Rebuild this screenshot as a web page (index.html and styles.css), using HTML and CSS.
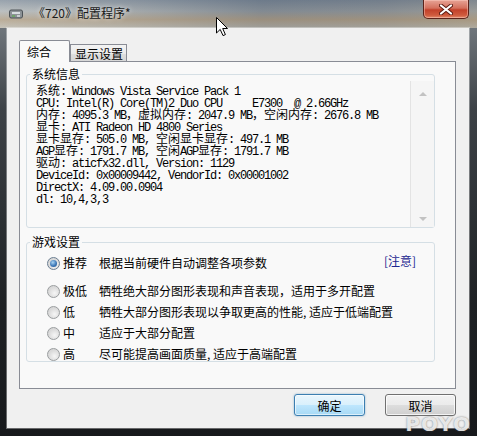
FILE: index.html
```html
<!DOCTYPE html>
<html lang="zh-CN">
<head>
    <meta charset="UTF-8">
    <title>《720》配置程序</title>
    <link rel="stylesheet" href="styles.css">
</head>
<body>
    <div class="window">
        <div class="titlebar">
            <svg class="app-icon" width="14" height="12" viewBox="0 0 14 12">
                <path d="M2 2 H12 Q13.5 2 13.5 4 V8 Q13.5 10 12 10 H2 Q0.5 10 0.5 8 V4 Q0.5 2 2 2 Z" fill="#8c9296" stroke="#4d5357" stroke-width="1"/>
                <rect x="3" y="4" width="8" height="2" fill="#d8dde0"/>
                <rect x="3" y="7" width="3" height="2" fill="#6fa36a"/>
                <rect x="8" y="7" width="3" height="2" fill="#c9cdd0"/>
            </svg>
            <span class="title">《720》配置程序*</span>
            <div class="close-btn">
                <svg width="14" height="11" viewBox="0 0 14 11">
                    <path d="M2 1.5 L12 9.5 M12 1.5 L2 9.5" stroke="#5a1a10" stroke-width="4" stroke-linecap="round"/>
                    <path d="M2 1.5 L12 9.5 M12 1.5 L2 9.5" stroke="#ffffff" stroke-width="2.2" stroke-linecap="round"/>
                </svg>
            </div>
        </div>

        <div class="client">
            <div class="tabs">
                <div class="tab active">综合</div>
                <div class="tab">显示设置</div>
            </div>

            <div class="panel">
                <fieldset class="group">
                    <legend>系统信息</legend>
                    <div class="info">
<pre class="info-text"><span class="c">系统</span>: Windows Vista Service Pack 1
CPU: Intel(R) Core(TM)2 Duo CPU     E7300  @ 2.66GHz
<span class="c">内存</span>: 4095.3 MB<span class="c">，虚拟内存</span>: 2047.9 MB<span class="c">，空闲内存</span>: 2676.8 MB
<span class="c">显卡</span>: ATI Radeon HD 4800 Series
<span class="c">显卡显存</span>: 505.0 MB, <span class="c">空闲显卡显存</span>: 497.1 MB
AGP<span class="c">显存</span>: 1791.7 MB, <span class="c">空闲</span>AGP<span class="c">显存</span>: 1791.7 MB
<span class="c">驱动</span>: aticfx32.dll, Version: 1129
DeviceId: 0x00009442, VendorId: 0x00001002
DirectX: 4.09.00.0904
dl: 10,4,3,3</pre>
                        <div class="scrollbar">
                            <span class="arrow up"></span>
                            <span class="arrow down"></span>
                        </div>
                    </div>
                </fieldset>

                <fieldset class="group game">
                    <legend>游戏设置</legend>
                    <div class="options">
                        <div class="option first">
                            <span class="radio checked"></span>
                            <span class="opt-name">推荐</span>
                            <span class="opt-desc">根据当前硬件自动调整各项参数</span>
                            <span class="note">[注意]</span>
                        </div>
                        <div class="option">
                            <span class="radio"></span>
                            <span class="opt-name">极低</span>
                            <span class="opt-desc">牺牲绝大部分图形表现和声音表现，适用于多开配置</span>
                        </div>
                        <div class="option">
                            <span class="radio"></span>
                            <span class="opt-name">低</span>
                            <span class="opt-desc">牺牲大部分图形表现以争取更高的性能, 适应于低端配置</span>
                        </div>
                        <div class="option">
                            <span class="radio"></span>
                            <span class="opt-name">中</span>
                            <span class="opt-desc">适应于大部分配置</span>
                        </div>
                        <div class="option">
                            <span class="radio"></span>
                            <span class="opt-name">高</span>
                            <span class="opt-desc">尽可能提高画面质量, 适应于高端配置</span>
                        </div>
                    </div>
                </fieldset>
            </div>

            <div class="buttons">
                <button type="button" class="btn default">确定</button>
                <button type="button" class="btn">取消</button>
            </div>
        </div>

        <svg class="cursor" width="13" height="20" viewBox="0 0 13 20">
            <path d="M0.5 0.5 L0.5 16 L4.2 12.4 L7 18.6 L9.4 17.6 L6.7 11.5 L11.5 11.5 Z" fill="#fff" stroke="#000" stroke-width="1"/>
        </svg>
        <div class="watermark">POYO</div>
    </div>
</body>
</html>
```

FILE: styles.css
```css
body {
    margin: 0;
    background: #25282c;
    font-family: "Noto Sans CJK SC", sans-serif;
}

.window {
    position: relative;
    width: 477px;
    height: 436px;
    display: flex;
    flex-direction: column;
    overflow: hidden;
    background: linear-gradient(180deg, #80878d 0%, #3d4247 25%, #1e2124 70%, #17191c 100%);
}

/* title bar (aero glass, blurred) */
.titlebar {
    height: 28px;
    display: flex;
    align-items: flex-start;
    padding: 0 8px 0 9px;
    background:
        linear-gradient(180deg, rgba(70, 90, 115, 0.4) 0%, rgba(110, 115, 115, 0.2) 40%, rgba(170, 142, 104, 0.55) 70%, rgba(185, 175, 155, 0.45) 100%),
        linear-gradient(90deg, #cfd3d4 0%, #b5babd 25%, #87909a 55%, #8f959b 80%, #a6a6a1 100%);
}

.app-icon {
    margin-top: 8px;
}

.title {
    margin: 5px 0 0 10px;
    font-size: 12px;
    line-height: 16px;
    color: #1a1a1a;
    text-shadow: 0 0 5px rgba(255, 255, 255, 0.9);
}

.close-btn {
    margin-left: auto;
    width: 46px;
    height: 19px;
    box-sizing: border-box;
    display: flex;
    align-items: center;
    justify-content: center;
    border: 1px solid #5b231a;
    border-top: none;
    border-radius: 0 0 5px 5px;
    background: linear-gradient(180deg, #e7a496 0%, #d4705d 45%, #c2412a 55%, #cf5b3e 85%, #e38d6d 100%);
    box-shadow: inset 0 0 0 1px rgba(255, 210, 200, 0.45);
}

/* client area */
.client {
    flex: 1;
    margin: 0 8px 8px 7px;
    padding: 12px 13px 0 12px;
    display: flex;
    flex-direction: column;
    background: #f0f0f0;
    box-shadow: 0 0 0 1px rgba(255, 255, 255, 0.35);
}

.tabs {
    display: flex;
    align-items: flex-end;
    height: 22px;
}

.tab {
    box-sizing: border-box;
    border: 1px solid #898c95;
    border-bottom: none;
    font-size: 12px;
    color: #000;
}

.tab.active {
    position: relative;
    z-index: 2;
    width: 51px;
    height: 22px;
    padding: 2px 0 0 7px;
    line-height: 18px;
    background: #f9f9f9;
    border-radius: 2px 2px 0 0;
}

.tab:not(.active) {
    width: 57px;
    height: 18px;
    padding-left: 4px;
    line-height: 17px;
    background: linear-gradient(180deg, #f3f3f3 0%, #ebebeb 50%, #dedede 51%, #d6d6d6 100%);
}

.panel {
    height: 328px;
    box-sizing: border-box;
    margin-top: -1px;
    padding: 5px 20px 0 6px;
    border: 1px solid #898c95;
    background: #f9f9f9;
}

/* group boxes */
.group {
    margin: 0;
    padding: 0;
    min-width: 0;
    border: 1px solid #d5dfe5;
    border-radius: 3px;
}

.group legend {
    margin-left: 3px;
    padding: 0 2px;
    font-size: 12px;
    line-height: 14px;
    color: #000;
}

.group.game {
    margin-top: 7px;
}

.info {
    height: 146px;
    box-sizing: border-box;
    display: flex;
    padding: 5px 0 0 9px;
}

.info-text {
    flex: 1;
    margin: 0;
    font-family: "Liberation Mono", "Noto Sans CJK SC", monospace;
    font-size: 12px;
    line-height: 12px;
    letter-spacing: -1.2px;
    color: #000;
}

.info-text .c {
    letter-spacing: 0;
}

.scrollbar {
    width: 23px;
    margin-top: -5px;
    padding-top: 5px;
    display: flex;
    flex-direction: column;
    justify-content: space-between;
    align-items: center;
    border-left: 1px solid #e3e3e3;
    background: #f5f5f5;
}

.arrow {
    width: 0;
    height: 0;
    border-left: 4px solid transparent;
    border-right: 4px solid transparent;
    margin: 6px 0;
}

.arrow.up {
    border-bottom: 4px solid #c2c2c2;
}

.arrow.down {
    border-top: 4px solid #c2c2c2;
}

/* radio options */
.options {
    padding: 7px 18px 0 20px;
}

.option {
    display: flex;
    align-items: center;
    height: 14px;
    margin-bottom: 7px;
    font-size: 12px;
    line-height: 14px;
    color: #000;
    white-space: nowrap;
}

.option.first {
    margin-bottom: 14px;
}

.option:last-child {
    margin-bottom: 0;
}

.radio {
    position: relative;
    width: 13px;
    height: 13px;
    box-sizing: border-box;
    margin-right: 3px;
    border: 1px solid #9a9d9f;
    border-radius: 50%;
    background: radial-gradient(circle at 60% 65%, #f6f6f6 0%, #dcdcdc 55%, #cfcfcf 100%);
}

.radio.checked {
    border-color: #6b7e91;
}

.radio.checked::after {
    content: "";
    position: absolute;
    left: 2px;
    top: 2px;
    width: 7px;
    height: 7px;
    border-radius: 50%;
    background: radial-gradient(circle at 40% 35%, #a9d4f3 0%, #3e79b8 55%, #1f4f86 100%);
}

.opt-name {
    width: 36px;
}

.note {
    margin-left: auto;
    margin-top: -5px;
    color: #1c2690;
}

/* dialog buttons */
.buttons {
    display: flex;
    justify-content: flex-end;
    gap: 20px;
    margin-top: 5px;
}

.btn {
    width: 71px;
    height: 22px;
    padding: 0;
    font-family: "Noto Sans CJK SC", sans-serif;
    font-size: 12px;
    color: #000;
    border: 1px solid #707070;
    border-radius: 3px;
    background: linear-gradient(180deg, #f2f2f2 0%, #ebebeb 50%, #dddddd 51%, #cfcfcf 100%);
    box-shadow: inset 0 0 0 1px rgba(255, 255, 255, 0.75);
}

.btn.default {
    border-color: #3c7fb1;
    background: linear-gradient(180deg, #eaf6fd 0%, #d9f0fc 50%, #bee6fd 51%, #a7d9f5 100%);
    box-shadow: inset 0 0 0 1px rgba(255, 255, 255, 0.6), 0 0 2px rgba(60, 127, 177, 0.6);
}

/* overlays from the screenshot */
.cursor {
    position: absolute;
    left: 216px;
    top: 17px;
}

.watermark {
    position: absolute;
    right: 6px;
    bottom: 2px;
    font-family: "DejaVu Sans", sans-serif;
    font-weight: bold;
    font-size: 20px;
    line-height: 20px;
    letter-spacing: 1px;
    color: rgba(245, 245, 245, 0.88);
    text-shadow: 0 0 2px rgba(70, 70, 70, 0.7);
}
```
